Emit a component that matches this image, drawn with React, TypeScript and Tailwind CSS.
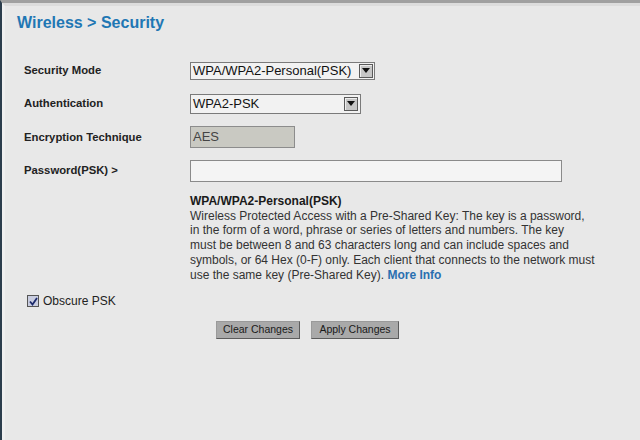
import React from 'react';

const Arrow = () => (
  <div className="flex h-[14px] w-[14px] items-center justify-center border border-[#5a5a5a] bg-[#c6c6c6] shadow-[inset_1px_1px_0_#eeeeee]">
    <svg width="8" height="5" viewBox="0 0 8 5">
      <path d="M0 0 L8 0 L4 5 Z" fill="#111" />
    </svg>
  </div>
);

const Row = ({ label, h, children }: { label: string; h: string; children: React.ReactNode }) => (
  <div className={`flex items-center ${h}`}>
    <div className="w-[166px] text-[11.3px] font-bold text-[#222]">{label}</div>
    {children}
  </div>
);

export default function App() {
  return (
    <div
      className="h-[440px] w-[640px] overflow-hidden border-l-2 border-t-[3px] border-l-[#2b3d4c] border-t-[#a0a0a0] bg-[#e8e8e8]"
      style={{ fontFamily: '"Liberation Sans", Arial, sans-serif' }}
    >
      <div className="h-full border-l-[3px] border-t-[3px] border-l-[#efefef] border-t-[#dcdcdc]">
        <h1 className="mb-[21px] pl-[12px] pt-[7px] text-[16px] font-bold leading-[20px] text-[#1f77b4]">
          Wireless &gt; Security
        </h1>

        <div className="pl-[19px]">
          <Row label="Security Mode" h="h-[33px]">
            <div className="flex h-[18px] w-[185px] items-center justify-between border border-[#7a7a7a] bg-[#f2f2f2] pl-[2px] pr-[1px] text-[13px] text-[#111]">
              <span>WPA/WPA2-Personal(PSK)</span>
              <Arrow />
            </div>
          </Row>
          <Row label="Authentication" h="h-[33px]">
            <div className="flex h-[20px] w-[171px] items-center justify-between border border-[#7a7a7a] bg-[#f2f2f2] pl-[2px] pr-[2px] text-[13px] text-[#111]">
              <span>WPA2-PSK</span>
              <Arrow />
            </div>
          </Row>
          <Row label="Encryption Technique" h="h-[34px]">
            <div className="flex h-[22px] w-[105px] items-center border border-[#8c8c8c] bg-[#c9c9c2] pl-[2px] text-[13px] text-[#444]">
              AES
            </div>
          </Row>
          <Row label="Password(PSK) >" h="h-[33px]">
            <div className="h-[22px] w-[372px] border border-[#8a8a8a] bg-[#f4f4f4]" />
          </Row>

          <div className="ml-[166px] mt-[7px] whitespace-nowrap text-[12px] leading-[14.7px] text-[#333]">
            <div className="font-bold text-[#1a1a1a]">WPA/WPA2-Personal(PSK)</div>
            <div>Wireless Protected Access with a Pre-Shared Key: The key is a password,</div>
            <div>in the form of a word, phrase or series of letters and numbers. The key</div>
            <div>must be between 8 and 63 characters long and can include spaces and</div>
            <div>symbols, or 64 Hex (0-F) only. Each client that connects to the network must</div>
            <div>
              use the same key (Pre-Shared Key).{' '}
              <span className="font-bold text-[#2a6fb0]">More Info</span>
            </div>
          </div>

          <div className="mt-[11px] flex h-[16px] items-center">
            <div className="ml-[3px] flex h-[12px] w-[12px] items-center justify-center border border-[#555] bg-[#c9cde0]">
              <svg width="9" height="9" viewBox="0 0 9 9">
                <path d="M1 4.5 L3.5 7.5 L8 1" fill="none" stroke="#1c2a6b" strokeWidth="1.8" />
              </svg>
            </div>
            <span className="ml-[4px] text-[12px] text-[#222]">Obscure PSK</span>
          </div>

          <div className="ml-[192px] mt-[12px] flex gap-[11px]">
            <button className="h-[18px] w-[84px] border border-[#9a9a9a] border-b-[#5c5c5c] border-r-[#5c5c5c] bg-[#a9a9a9] text-[10.5px] text-[#1a1a1a]">
              Clear Changes
            </button>
            <button className="h-[18px] w-[88px] border border-[#9a9a9a] border-b-[#5c5c5c] border-r-[#5c5c5c] bg-[#a9a9a9] text-[10.5px] text-[#1a1a1a]">
              Apply Changes
            </button>
          </div>
        </div>
      </div>
    </div>
  );
}
